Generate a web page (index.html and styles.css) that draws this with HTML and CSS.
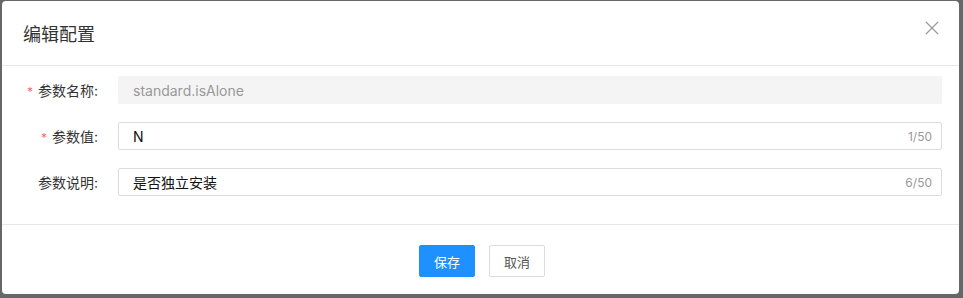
FILE: index.html
```html
<!DOCTYPE html>
<html lang="zh-CN">
<head>
    <meta charset="UTF-8">
    <title>编辑配置</title>
    <link rel="stylesheet" href="styles.css">
</head>
<body>
    <div class="dialog">
        <div class="dialog-header">
            <h2>编辑配置</h2>
            <button class="btn-close" aria-label="close">
                <svg width="14" height="14" viewBox="0 0 14 14"><path d="M1 1L13 13M13 1L1 13" stroke="#999" stroke-width="1.2" fill="none"/></svg>
            </button>
        </div>
        <div class="dialog-body">
            <div class="form-row">
                <label class="form-label"><span class="required">*</span>参数名称:</label>
                <div class="input-wrap disabled">
                    <input type="text" value="standard.isAlone" disabled>
                </div>
            </div>
            <div class="form-row">
                <label class="form-label"><span class="required">*</span>参数值:</label>
                <div class="input-wrap">
                    <input type="text" value="N">
                    <span class="count">1/50</span>
                </div>
            </div>
            <div class="form-row">
                <label class="form-label">参数说明:</label>
                <div class="input-wrap">
                    <input type="text" value="是否独立安装">
                    <span class="count">6/50</span>
                </div>
            </div>
        </div>
        <div class="dialog-footer">
            <button class="btn btn-primary">保存</button>
            <button class="btn btn-default">取消</button>
        </div>
    </div>
</body>
</html>
```

FILE: styles.css
```css
* {
    margin: 0;
    padding: 0;
    box-sizing: border-box;
    font-family: Inter, "Noto Sans CJK SC", sans-serif;
}

body {
    background: #676767;
    width: 963px;
    height: 298px;
    padding: 1px 4px 4px 2px;
}

.dialog {
    background: #fff;
    border-radius: 4px;
    height: 293px;
    display: flex;
    flex-direction: column;
}

.dialog-header {
    height: 65px;
    border-bottom: 1px solid #e8e8e8;
    display: flex;
    align-items: center;
    justify-content: space-between;
    padding: 0 20px 0 21px;
}

.dialog-header h2 {
    font-size: 18px;
    font-weight: 400;
    color: #333;
}

.btn-close {
    background: none;
    border: none;
    width: 14px;
    height: 14px;
    display: flex;
    margin-top: -10px;
    cursor: pointer;
}

.dialog-body {
    padding: 10px 17px 28px 0;
    display: flex;
    flex-direction: column;
    gap: 18px;
    border-bottom: 1px solid #e8e8e8;
}

.form-row {
    display: flex;
    align-items: center;
    height: 28px;
}

.form-label {
    width: 96px;
    margin-right: 20px;
    text-align: right;
    font-size: 14px;
    color: #333;
}

.required {
    color: #f56c6c;
    font-size: 12px;
    margin-right: 5px;
}

.input-wrap {
    flex: 1;
    height: 28px;
    border: 1px solid #dcdcdc;
    border-radius: 2px;
    display: flex;
    align-items: center;
    padding: 0 9px 0 14px;
}

.input-wrap.disabled {
    background: #f4f4f4;
    border-color: #f4f4f4;
}

.input-wrap input {
    flex: 1;
    border: none;
    outline: none;
    background: transparent;
    font-size: 14px;
    color: #111;
}

.input-wrap input:disabled {
    color: #999;
}

.count {
    font-size: 12px;
    color: #999;
}

.dialog-footer {
    display: flex;
    justify-content: center;
    gap: 14px;
    padding: 20px 0 0 3px;
}

.btn {
    width: 56px;
    height: 32px;
    border-radius: 2px;
    font-size: 13px;
    cursor: pointer;
}

.btn-primary {
    background: #1e90ff;
    border: 1px solid #1e90ff;
    color: #fff;
}

.btn-default {
    background: #fff;
    border: 1px solid #dcdcdc;
    color: #555;
}
```
